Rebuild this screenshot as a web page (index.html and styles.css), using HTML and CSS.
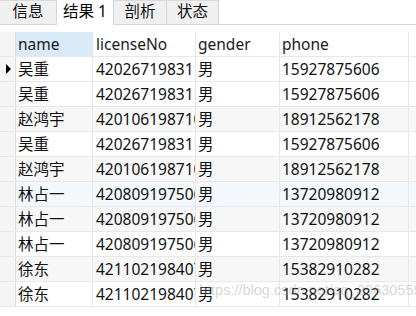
FILE: index.html
```html
<!DOCTYPE html>
<html>
<head>
<meta charset="utf-8">
<link rel="stylesheet" href="styles.css">
</head>
<body>
<div class="tabs">
  <div class="tab t1">信息</div>
  <div class="tab t2 active">结果 1</div>
  <div class="tab t3">剖析</div>
  <div class="tab t4">状态</div>
  <div class="tab-fill"></div>
</div>
<div class="grid">
  <div class="row head">
    <div class="c rh"></div>
    <div class="c name sel">name</div>
    <div class="c lic">licenseNo</div>
    <div class="c gen">gender</div>
    <div class="c ph">phone</div>
  </div>
  <div class="row cur">
    <div class="c rh"><span class="tri"></span></div>
    <div class="c name">吴重</div>
    <div class="c lic">420267198311052316</div>
    <div class="c gen">男</div>
    <div class="c ph">15927875606</div>
  </div>
  <div class="row">
    <div class="c rh"></div>
    <div class="c name">吴重</div>
    <div class="c lic">420267198311052316</div>
    <div class="c gen">男</div>
    <div class="c ph">15927875606</div>
  </div>
  <div class="row alt">
    <div class="c rh"></div>
    <div class="c name">赵鸿宇</div>
    <div class="c lic">420106198710064513</div>
    <div class="c gen">男</div>
    <div class="c ph">18912562178</div>
  </div>
  <div class="row">
    <div class="c rh"></div>
    <div class="c name">吴重</div>
    <div class="c lic">420267198311052316</div>
    <div class="c gen">男</div>
    <div class="c ph">15927875606</div>
  </div>
  <div class="row alt">
    <div class="c rh"></div>
    <div class="c name">赵鸿宇</div>
    <div class="c lic">420106198710064513</div>
    <div class="c gen">男</div>
    <div class="c ph">18912562178</div>
  </div>
  <div class="row hov">
    <div class="c rh"></div>
    <div class="c name">林占一</div>
    <div class="c lic">420809197506124419</div>
    <div class="c gen">男</div>
    <div class="c ph">13720980912</div>
  </div>
  <div class="row alt">
    <div class="c rh"></div>
    <div class="c name">林占一</div>
    <div class="c lic">420809197506124419</div>
    <div class="c gen">男</div>
    <div class="c ph">13720980912</div>
  </div>
  <div class="row">
    <div class="c rh"></div>
    <div class="c name">林占一</div>
    <div class="c lic">420809197506124419</div>
    <div class="c gen">男</div>
    <div class="c ph">13720980912</div>
  </div>
  <div class="row alt">
    <div class="c rh"></div>
    <div class="c name">徐东</div>
    <div class="c lic">421102198407153512</div>
    <div class="c gen">男</div>
    <div class="c ph">15382910282</div>
  </div>
  <div class="row">
    <div class="c rh"></div>
    <div class="c name">徐东</div>
    <div class="c lic">421102198407153512</div>
    <div class="c gen">男</div>
    <div class="c ph">15382910282</div>
  </div>
  <div class="watermark">https://blog.csdn.net/qq_39630559</div>
</div>
</body>
</html>
```
FILE: styles.css
```css
html, body {
  margin: 0;
  padding: 0;
  background: #ffffff;
}
body {
  width: 416px;
  height: 316px;
  overflow: hidden;
  font-family: "Noto Sans", "Noto Sans CJK SC", sans-serif;
  font-size: 15.5px;
  color: #111;
}
.tabs {
  display: flex;
  height: 25px;
}
.tab {
  box-sizing: border-box;
  height: 25px;
  background: #f0f0f0;
  border-top: 1px solid #dadada;
  border-right: 1px solid #d6d6d6;
  border-bottom: 1px solid #d6d6d6;
  display: flex;
  align-items: center;
  justify-content: center;
  line-height: 1;
  padding-bottom: 1px;
}
.t1 { width: 57px; }
.t2 { width: 57px; }
.t3 { width: 53px; }
.t4 { width: 52px; }
.tab.active {
  background: #ffffff;
  border-top: none;
  border-bottom: none;
  color: #000;
}
.tab-fill {
  flex: 1;
  border-bottom: 1px solid #d6d6d6;
}
.grid {
  position: relative;
  margin-top: 7px;
}
.row {
  display: flex;
  height: 25px;
  box-sizing: border-box;
  border-bottom: 1px solid #e8e8e8;
}
.c {
  box-sizing: border-box;
  height: 24px;
  border-right: 1px solid #e6e6e6;
  padding-left: 2px;
  white-space: nowrap;
  overflow: hidden;
  text-overflow: clip;
  line-height: 24px;
}
.rh {
  width: 16px;
  background: #f5f5f5;
  border-right: 1px solid #dcdcdc;
  padding-left: 0;
  position: relative;
}
.name { width: 77px; }
.lic { width: 103px; padding-left: 3px; }
.gen { width: 84px; }
.ph { width: 129px; }
.head .c { color: #1a1a1a; }
.head .sel { background: #d9eaf8; }
.alt { background: #f7f7f7; }
.hov { background: #f3f8fd; }
.alt .rh, .hov .rh { background: #f5f5f5; }
.tri {
  position: absolute;
  left: 6px;
  top: 7px;
  width: 0;
  height: 0;
  border-top: 5px solid transparent;
  border-bottom: 5px solid transparent;
  border-left: 5px solid #000;
}
.watermark {
  position: absolute;
  left: 199px;
  top: 250px;
  font-family: "Liberation Sans", sans-serif;
  font-size: 14.5px;
  color: rgba(150, 150, 150, 0.4);
  white-space: nowrap;
  pointer-events: none;
}
```
